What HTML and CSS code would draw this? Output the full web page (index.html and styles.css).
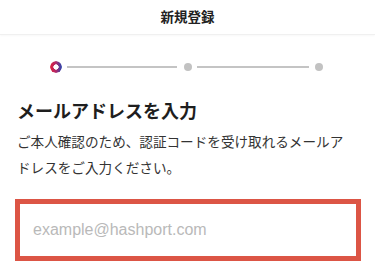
FILE: index.html
```html
<!DOCTYPE html>
<html lang="ja">
<head>
<meta charset="utf-8">
<title>新規登録</title>
<link rel="stylesheet" href="styles.css">
</head>
<body>
<header class="topbar">
  <h1 class="topbar-title">新規登録</h1>
</header>
<main class="content">
  <div class="stepper">
    <span class="step-ring"></span>
    <span class="step-line step-line-1"></span>
    <span class="step-dot"></span>
    <span class="step-line step-line-2"></span>
    <span class="step-dot"></span>
  </div>
  <section class="intro">
    <h2 class="intro-title">メールアドレスを入力</h2>
    <p class="intro-text">ご本人確認のため、認証コードを受け取れるメールアドレスをご入力ください。</p>
  </section>
  <div class="field-wrap">
    <input class="field" type="email" placeholder="example@hashport.com">
  </div>
</main>
</body>
</html>
```
FILE: styles.css
```css
html, body {
  margin: 0;
  padding: 0;
  background: #ffffff;
}
body {
  font-family: "Noto Sans CJK JP", "Noto Sans", sans-serif;
  color: #222222;
  width: 375px;
  height: 270px;
  overflow: hidden;
}
.topbar {
  height: 34px;
  display: flex;
  align-items: center;
  justify-content: center;
  border-bottom: 1px solid #f0f0f0;
  box-shadow: 0 1px 2px rgba(0, 0, 0, 0.03);
}
.topbar-title {
  margin: 0;
  font-size: 13.5px;
  font-weight: 700;
  color: #222222;
  line-height: 1;
}
.content {
  display: flex;
  flex-direction: column;
}
.stepper {
  display: flex;
  align-items: center;
  height: 12px;
  margin-top: 26px;
  padding-left: 50px;
}
.step-ring {
  width: 12px;
  height: 12px;
  border-radius: 50%;
  background: linear-gradient(90deg, #e0203a 0%, #b0286a 50%, #2447b0 100%);
  -webkit-mask: radial-gradient(circle, transparent 2.4px, #000 2.9px);
          mask: radial-gradient(circle, transparent 2.4px, #000 2.9px);
  flex: none;
}
.step-line {
  height: 2px;
  background: #c4c4c4;
  flex: none;
}
.step-line-1 {
  width: 110px;
  margin: 0 7px 0 5px;
}
.step-line-2 {
  width: 112px;
  margin: 0 6px 0 5px;
}
.step-dot {
  width: 8px;
  height: 8px;
  border-radius: 50%;
  background: #c2c2c2;
  flex: none;
}
.intro {
  padding: 0 20px 0 17px;
  margin-top: 24px;
}
.intro-title {
  margin: 0;
  font-size: 18px;
  line-height: 26px;
  font-weight: 700;
  color: #1e1e1e;
}
.intro-text {
  margin: 5px 0 0;
  font-size: 13.6px;
  line-height: 26px;
  color: #333333;
}
.field-wrap {
  margin-top: 19px;
  padding-left: 15px;
}
.field {
  display: block;
  box-sizing: border-box;
  width: 346px;
  height: 62px;
  border: 5px solid #dc5545;
  border-radius: 0;
  outline: none;
  margin: 0;
  padding: 0 0 0 13px;
  font-family: "Liberation Sans", Arial, sans-serif;
  font-size: 16px;
  color: #222222;
  background: #ffffff;
}
.field::placeholder {
  color: #b9b9b9;
}
```
